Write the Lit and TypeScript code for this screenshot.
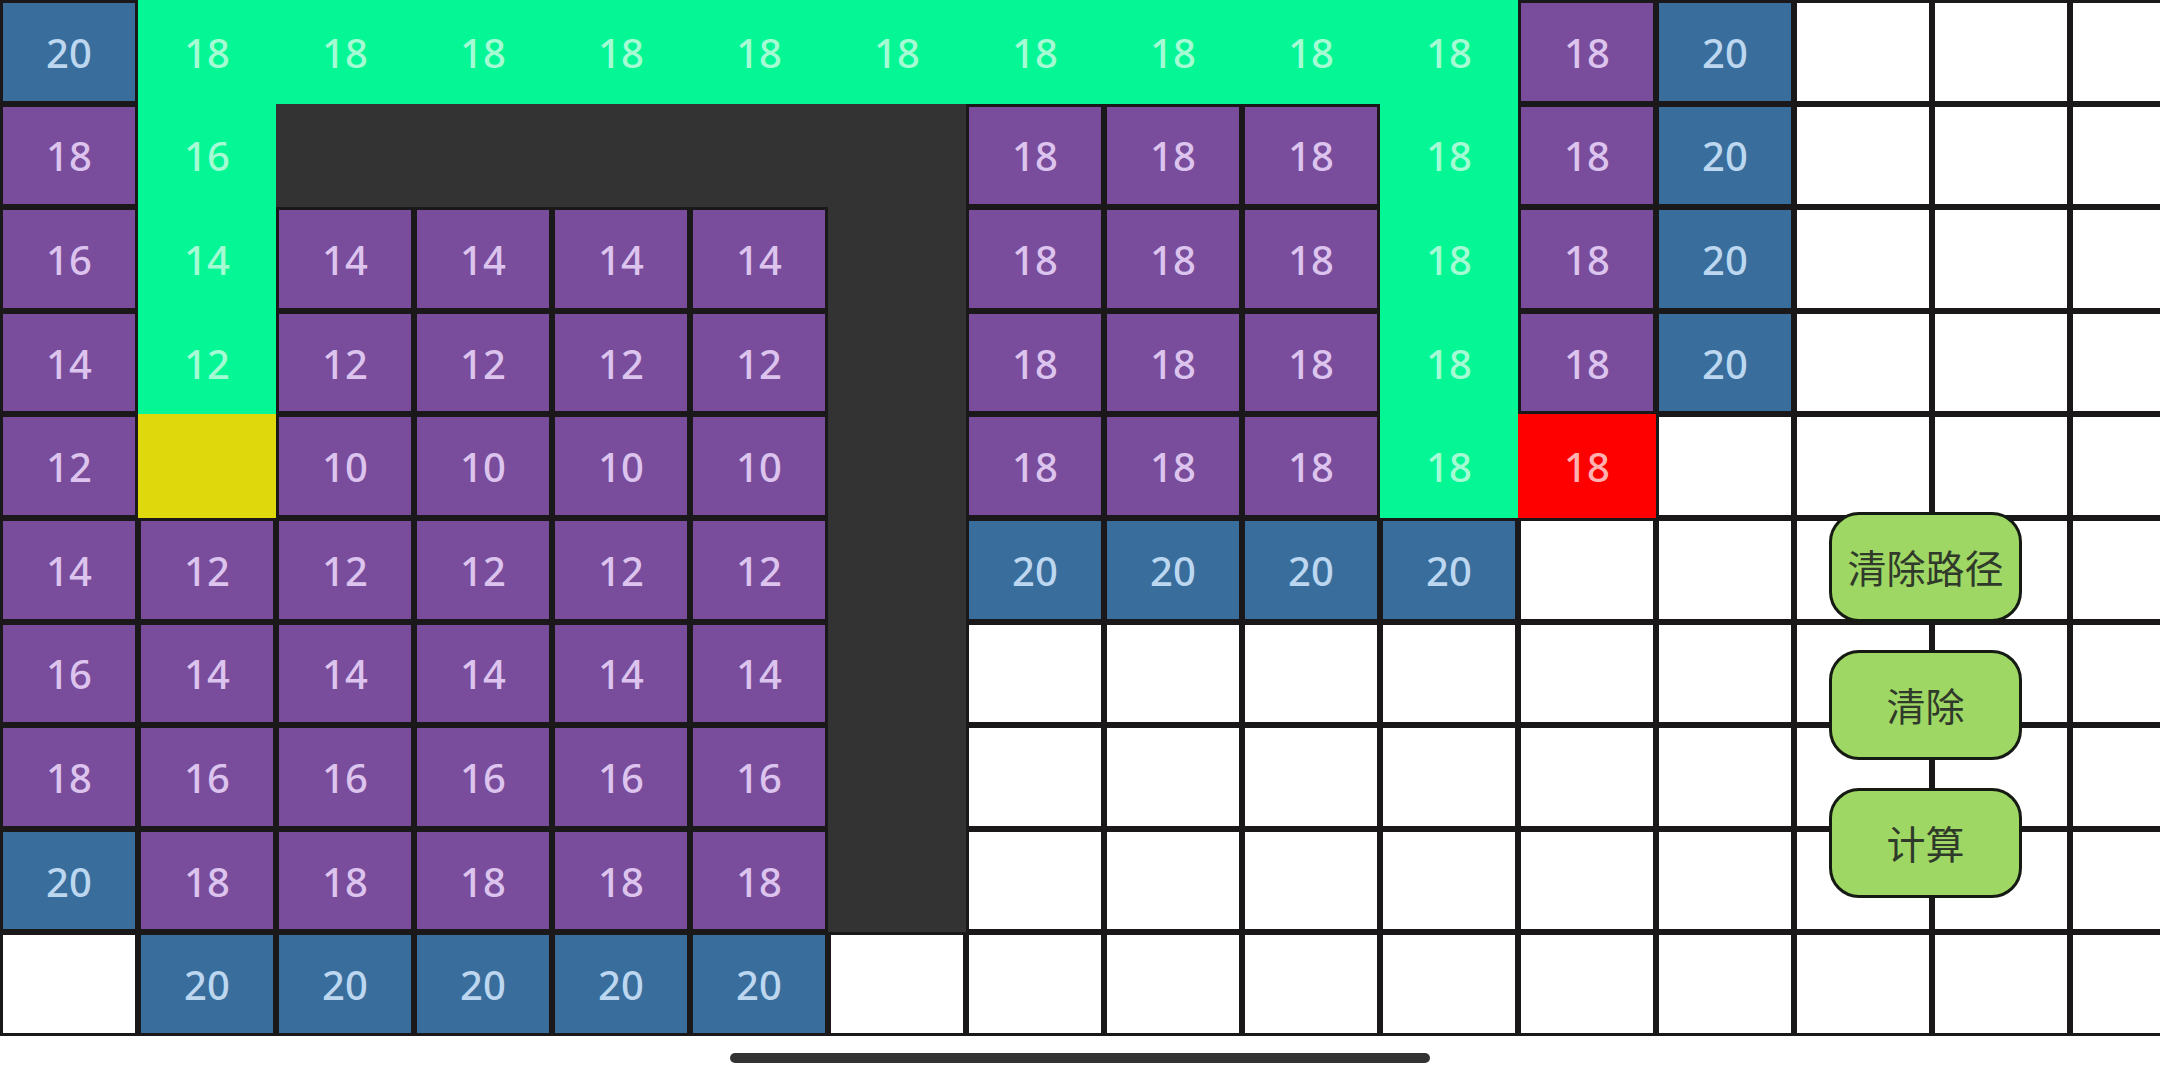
import { LitElement, html, css } from "lit";
import { customElement, state } from "lit/decorators.js";
import { classMap } from "lit/directives/class-map.js";

type Kind = "open" | "closed" | "path" | "wall" | "start" | "end" | "blank";

interface Cell {
  kind: Kind;
  cost: string;
}

const CELL_WIDTH = 138;

const KINDS: Record<string, Kind> = {
  o: "open",
  c: "closed",
  p: "path",
  w: "wall",
  s: "start",
  e: "end",
};

/* One string per row; each token is a kind letter followed by its cost. */
const ROWS = [
  "o20 p18 p18 p18 p18 p18 p18 p18 p18 p18 p18 c18 o20",
  "c18 p16 w w w w w c18 c18 c18 p18 c18 o20",
  "c16 p14 c14 c14 c14 c14 w c18 c18 c18 p18 c18 o20",
  "c14 p12 c12 c12 c12 c12 w c18 c18 c18 p18 c18 o20",
  "c12 s c10 c10 c10 c10 w c18 c18 c18 p18 e18",
  "c14 c12 c12 c12 c12 c12 w o20 o20 o20 o20",
  "c16 c14 c14 c14 c14 c14 w",
  "c18 c16 c16 c16 c16 c16 w",
  "o20 c18 c18 c18 c18 c18 w",
  "- o20 o20 o20 o20 o20",
];

const parseRow = (row: string): Cell[] =>
  row.split(" ").map((token) => ({
    kind: KINDS[token[0]] ?? "blank",
    cost: token.slice(1),
  }));

const BLANK: Cell = { kind: "blank", cost: "" };

@customElement("app-root")
export class AppRoot extends LitElement {
  @state() private rows: Cell[][] = ROWS.map(parseRow);
  @state() private columns = this.countColumns();

  static styles = css`
    :host {
      position: relative;
      display: flex;
      flex-direction: column;
      min-height: 100vh;
      overflow: hidden;
      background: #fff;
      font-family: "Noto Sans", "Noto Sans CJK SC", sans-serif;
    }
    .board {
      flex: 1;
      display: flex;
      flex-direction: column;
    }
    .row {
      flex: 1 0 0;
      display: flex;
      min-height: 56px;
    }
    .cell {
      flex: none;
      box-sizing: border-box;
      width: 138px;
      padding-top: 2px;
      display: flex;
      align-items: center;
      justify-content: center;
      border: 3px solid #1a1818;
      font-size: 40px;
      font-weight: 500;
      line-height: 48px;
    }
    .open {
      background: #386d9c;
      color: #bcd7ef;
    }
    .closed {
      background: #794d9b;
      color: #dcc4ee;
    }
    .path {
      background: #04f794;
      border-color: #04f794;
      color: #a4fbd4;
    }
    .wall {
      background: #333;
      border-color: #333;
    }
    .start {
      background: #dfd80c;
      border-color: #dfd80c;
    }
    .end {
      background: #f00;
      border-color: #f00;
      color: #ffb0b0;
    }
    .actions {
      position: absolute;
      right: 138px;
      bottom: 182px;
      display: flex;
      flex-direction: column;
      gap: 28px;
    }
    .action {
      box-sizing: border-box;
      width: 193px;
      height: 110px;
      padding: 0 0 2px;
      border: 3px solid #151a12;
      border-radius: 30px;
      background: #9fd764;
      color: #2f3a2a;
      font-family: "Noto Sans CJK SC", sans-serif;
      font-size: 39px;
      line-height: 56px;
      white-space: nowrap;
    }
    .footer {
      height: 44px;
      display: flex;
      justify-content: center;
      align-items: center;
    }
    .handle {
      width: 700px;
      max-width: 60%;
      height: 10px;
      border-radius: 5px;
      background: #333;
    }
  `;

  connectedCallback() {
    super.connectedCallback();
    window.addEventListener("resize", this.onResize);
  }

  disconnectedCallback() {
    window.removeEventListener("resize", this.onResize);
    super.disconnectedCallback();
  }

  private onResize = () => {
    this.columns = this.countColumns();
  };

  private countColumns() {
    return Math.ceil(window.innerWidth / CELL_WIDTH);
  }

  private clearPath() {
    this.rows = this.rows.map((row) =>
      row.map((cell) =>
        ["open", "closed", "path"].includes(cell.kind)
          ? BLANK
          : { ...cell, cost: "" },
      ),
    );
  }

  private clearAll() {
    this.rows = this.rows.map(() => []);
  }

  private compute() {
    this.rows = ROWS.map(parseRow);
  }

  private renderRow(row: Cell[]) {
    return html`<div class="row">
      ${Array.from({ length: this.columns }, (_, i) => {
        const cell = row[i] ?? BLANK;
        return html`<div class=${classMap({ cell: true, [cell.kind]: true })}>${cell.cost}</div>`;
      })}
    </div>`;
  }

  render() {
    return html`
      <main class="board">${this.rows.map((row) => this.renderRow(row))}</main>
      <div class="actions">
        <button class="action" type="button" @click=${this.clearPath}>清除路径</button>
        <button class="action" type="button" @click=${this.clearAll}>清除</button>
        <button class="action" type="button" @click=${this.compute}>计算</button>
      </div>
      <div class="footer"><div class="handle"></div></div>
    `;
  }
}
